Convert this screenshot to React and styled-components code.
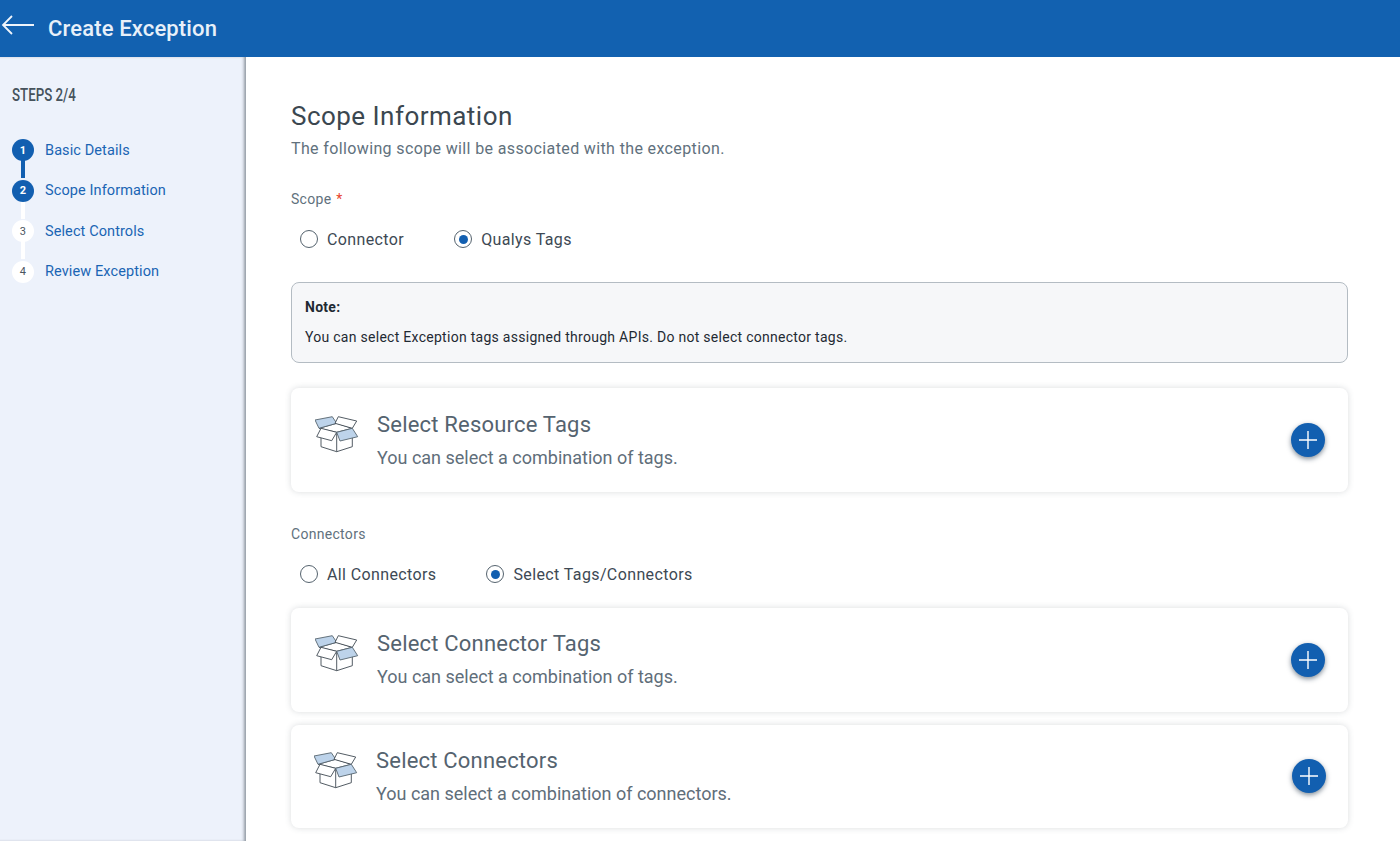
import React from 'react';
import styled, { createGlobalStyle } from 'styled-components';

const GlobalStyle = createGlobalStyle`
  html, body {
    margin: 0;
    height: 100%;
    overflow: hidden;
    background: #fff;
    font-family: Roboto, "Liberation Sans", sans-serif;
  }
  * { box-sizing: border-box; }
`;

const Page = styled.div`
  display: flex;
  flex-direction: column;
  height: 841px;
`;

const Header = styled.header`
  display: flex;
  align-items: center;
  flex: 0 0 57px;
  padding-left: 1px;
  background: #1261b0;
  color: #e8f0f9;
  position: relative;
  z-index: 2;
`;

const BackIcon = styled.svg`
  width: 34px;
  height: 24px;
  margin: -7px 13px 0 0;
`;

const HeaderTitle = styled.h1`
  margin: 0;
  font-size: 22px;
  font-weight: 500;
  letter-spacing: 0.15px;
`;

const Body = styled.div`
  display: flex;
  flex: 1;
  min-height: 0;
`;

const Sidebar = styled.aside`
  flex: 0 0 246px;
  padding: 28px 0 0 12px;
  background: #edf2fb;
  box-shadow: inset -3px 0 3px -1px rgba(60, 70, 80, 0.5);
`;

const StepsLabel = styled.div`
  height: 20px;
  margin-bottom: 25.3px;
  color: #46535c;
  font-size: 19px;
  font-weight: 500;
  line-height: 20px;
  transform: scaleX(0.7);
  transform-origin: left center;
  white-space: nowrap;
`;

const StepList = styled.ol`
  margin: 0;
  padding: 0;
  list-style: none;
`;

const Step = styled.li`
  display: flex;
  align-items: center;
  gap: 11px;
  height: 40.4px;
  position: relative;
  color: #1a65b4;
  font-size: 14.5px;
  letter-spacing: 0.1px;

  &:not(:last-child)::after {
    content: '';
    position: absolute;
    left: 9px;
    top: 28px;
    width: 4px;
    height: 20px;
    background: ${p => (p.$done ? '#125fb0' : '#fff')};
  }
`;

const StepDot = styled.span`
  display: flex;
  align-items: center;
  justify-content: center;
  flex: 0 0 22px;
  height: 22px;
  border-radius: 50%;
  position: relative;
  z-index: 1;
  background: ${p => (p.$active ? '#125fb0' : '#fff')};
  color: ${p => (p.$active ? '#fff' : '#4a5560')};
  font-size: 11px;
  font-weight: ${p => (p.$active ? 700 : 400)};
`;

const Main = styled.main`
  flex: 1;
  min-width: 0;
  padding: 43px 52px 0 45px;
  color: #3a4650;
`;

const Title = styled.h2`
  margin: 0;
  height: 32px;
  color: #3b4750;
  font-size: 26px;
  font-weight: 400;
  line-height: 32px;
  letter-spacing: 0.47px;
`;

const Subtitle = styled.p`
  margin: 5px 0 0;
  color: #61717d;
  font-size: 16px;
  line-height: 24px;
  letter-spacing: 0.37px;
`;

const FieldLabel = styled.div`
  color: #61717d;
  font-size: 14px;
  line-height: 20px;
  letter-spacing: 0.3px;
  margin-top: ${p => p.$top}px;
`;

const Required = styled.span`
  color: #e8442d;
  margin-left: 1px;
`;

const RadioRow = styled.div`
  display: flex;
  gap: 50px;
  align-items: center;
  height: 24px;
  margin: 18px 0 0 9px;
`;

const RadioOption = styled.label`
  display: flex;
  align-items: center;
  gap: 9px;
  color: #3d4954;
  font-size: 16px;
  letter-spacing: 0.38px;
`;

const RadioMark = styled.span`
  display: flex;
  align-items: center;
  justify-content: center;
  width: 18px;
  height: 18px;
  border: 1.5px solid #55636e;
  border-radius: 50%;
  background: #fff;

  &::after {
    content: '';
    display: ${p => (p.$on ? 'block' : 'none')};
    width: 9px;
    height: 9px;
    border-radius: 50%;
    background: #125fb0;
  }
`;

const Note = styled.div`
  height: 81px;
  margin-top: 31px;
  padding: 14px 13px;
  border: 1px solid #b4bcc3;
  border-radius: 8px;
  background: #f6f7f9;
  color: #1f2a33;
  font-size: 14px;
  line-height: 20px;
  letter-spacing: 0.28px;
`;

const NoteTitle = styled.div`
  font-weight: 700;
  margin-bottom: 10px;
`;

const Card = styled.section`
  display: flex;
  align-items: flex-start;
  height: ${p => p.$height}px;
  margin-top: ${p => p.$top}px;
  padding: ${p => p.$padTop}px ${p => p.$padRight}px 0 ${p => p.$padLeft}px;
  border-radius: 8px;
  background: #fff;
  box-shadow: 0 0 6px rgba(70, 80, 90, 0.2);
`;

const BoxIcon = styled.svg`
  flex: 0 0 44px;
  width: 44px;
  height: 38px;
  margin: 5px 18px 0 0;
`;

const CardText = styled.div`
  flex: 1;
`;

const CardTitle = styled.h3`
  margin: 0;
  color: #55636f;
  font-size: 22px;
  font-weight: 400;
  line-height: 28px;
  letter-spacing: 0.2px;
`;

const CardHint = styled.p`
  margin: 7px 0 0;
  color: #5f6e7a;
  font-size: 18px;
  line-height: 24px;
`;

const AddButton = styled.button`
  display: flex;
  align-items: center;
  justify-content: center;
  width: 34px;
  height: 34px;
  margin-top: ${p => p.$offset}px;
  padding: 0;
  border: none;
  border-radius: 50%;
  background: #125fb0;
  box-shadow: 0 2px 5px rgba(30, 50, 70, 0.55);
`;

const Box = () => (
  <BoxIcon viewBox="0 0 44 38" fill="none" stroke="#3f4a52" strokeWidth="0.9" strokeLinejoin="round">
    <path d="M6 16v14.7l15.7 5 15.6-5V16" fill="#fff" />
    <path d="M4 12.3L21.7 7.3 37.3 12.3 21.7 16.3z" fill="#fff" />
    <path d="M21.7 16.3v19.4" />
    <path d="M0 4L17.3.7l4.4 6.6L4 12.3z" fill="#bdd3ea" stroke="#56646e" />
    <path d="M23.3.7L41.7 5l-4.4 7.3L20 7.3z" fill="#fff" />
    <path d="M6 12.3l15.7 4-5 8.4-15-4z" fill="#fff" />
    <path d="M37.3 12.3l5.4 8.4L25 25l-3.3-8.7z" fill="#bdd3ea" stroke="#56646e" />
  </BoxIcon>
);

const Plus = () => (
  <svg width="18" height="18" viewBox="0 0 18 18" stroke="#fff" strokeWidth="1.4">
    <path d="M9 0v18M0 9h18" />
  </svg>
);

const TagCard = ({ title, hint, top, height = 104, padTop = 23, padLeft = 24, padRight = 23, offset = 12 }) => (
  <Card $top={top} $height={height} $padTop={padTop} $padLeft={padLeft} $padRight={padRight}>
    <Box />
    <CardText>
      <CardTitle>{title}</CardTitle>
      <CardHint>{hint}</CardHint>
    </CardText>
    <AddButton $offset={offset} aria-label={`Add ${title}`}>
      <Plus />
    </AddButton>
  </Card>
);

const steps = [
  { n: 1, label: 'Basic Details', active: true, done: true },
  { n: 2, label: 'Scope Information', active: true },
  { n: 3, label: 'Select Controls' },
  { n: 4, label: 'Review Exception' },
];

export default function App() {
  return (
    <Page>
      <GlobalStyle />
      <Header>
        <BackIcon viewBox="0 0 34 24" fill="none" stroke="#eef4fb" strokeWidth="1.8">
          <path d="M33 12H2M11 3l-9 9 9 9" />
        </BackIcon>
        <HeaderTitle>Create Exception</HeaderTitle>
      </Header>
      <Body>
        <Sidebar>
          <StepsLabel>STEPS 2/4</StepsLabel>
          <StepList>
            {steps.map(s => (
              <Step key={s.n} $done={s.done}>
                <StepDot $active={s.active}>{s.n}</StepDot>
                {s.label}
              </Step>
            ))}
          </StepList>
        </Sidebar>
        <Main>
          <Title>Scope Information</Title>
          <Subtitle>The following scope will be associated with the exception.</Subtitle>
          <FieldLabel $top={28}>
            Scope <Required>*</Required>
          </FieldLabel>
          <RadioRow>
            <RadioOption><RadioMark />Connector</RadioOption>
            <RadioOption><RadioMark $on />Qualys Tags</RadioOption>
          </RadioRow>
          <Note>
            <NoteTitle>Note:</NoteTitle>
            You can select Exception tags assigned through APIs. Do not select connector tags.
          </Note>
          <TagCard top={25} title="Select Resource Tags" hint="You can select a combination of tags." />
          <FieldLabel $top={32}>Connectors</FieldLabel>
          <RadioRow>
            <RadioOption><RadioMark />All Connectors</RadioOption>
            <RadioOption><RadioMark $on />Select Tags/Connectors</RadioOption>
          </RadioRow>
          <TagCard top={22} padTop={22} offset={13} title="Select Connector Tags" hint="You can select a combination of tags." />
          <TagCard top={13} height={103} padTop={22} padLeft={23} padRight={22} title="Select Connectors" hint="You can select a combination of connectors." />
        </Main>
      </Body>
    </Page>
  );
}
